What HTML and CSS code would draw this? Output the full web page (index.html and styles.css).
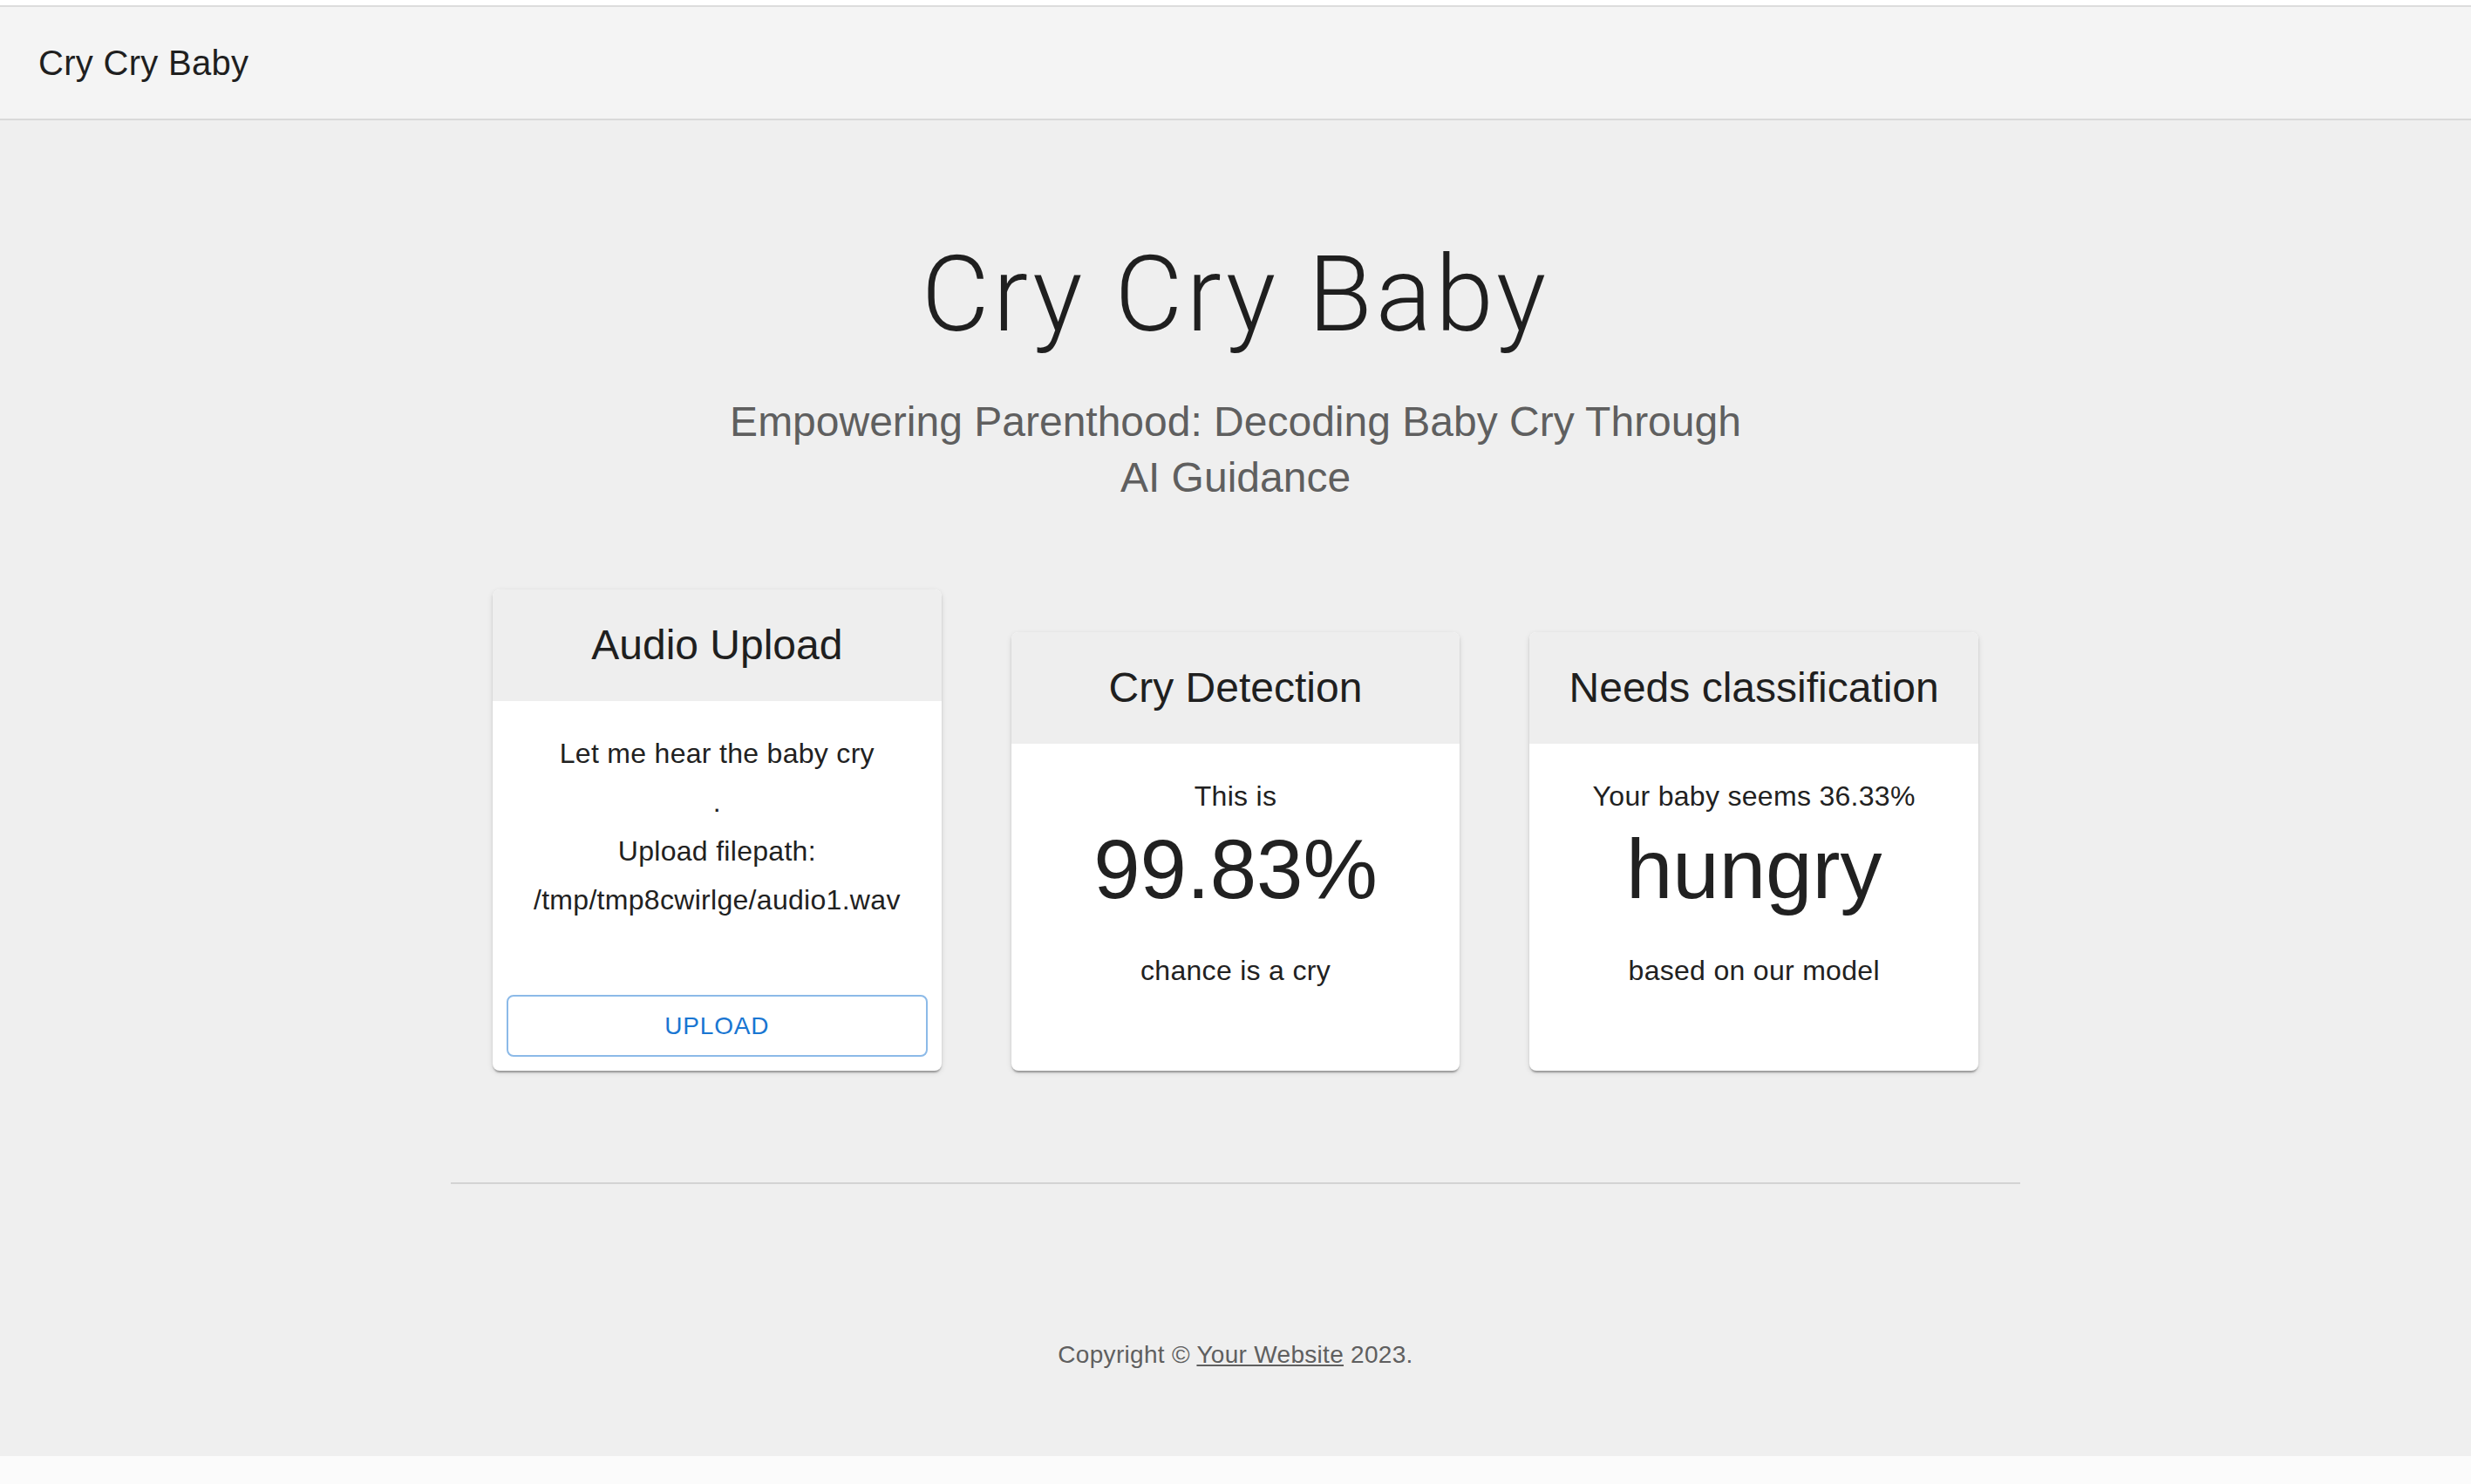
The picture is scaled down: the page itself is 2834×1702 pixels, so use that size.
FILE: index.html
```html
<!DOCTYPE html>
<html lang="en">
<head>
<meta charset="utf-8">
<title>Cry Cry Baby</title>
<link rel="stylesheet" href="styles.css">
</head>
<body>
<div class="page">
  <header class="appbar">
    <div class="toolbar">
      <h6 class="brand">Cry Cry Baby</h6>
    </div>
  </header>

  <main class="hero">
    <h1 class="hero-title">Cry Cry Baby</h1>
    <p class="hero-sub">Empowering Parenthood: Decoding Baby Cry Through AI Guidance</p>
  </main>

  <main class="cards">
    <div class="card-grid">
      <article class="card">
        <div class="card-header"><h2 class="card-title">Audio Upload</h2></div>
        <div class="card-content upload-content">
          <ul class="lines">
            <li>Let me hear the baby cry</li>
            <li>.</li>
            <li>Upload filepath:</li>
            <li>/tmp/tmp8cwirlge/audio1.wav</li>
          </ul>
        </div>
        <div class="card-actions">
          <button class="btn-outlined" type="button">Upload</button>
        </div>
      </article>

      <article class="card">
        <div class="card-header"><h2 class="card-title">Cry Detection</h2></div>
        <div class="card-content result-content">
          <p class="line">This is</p>
          <p class="big">99.83%</p>
          <p class="line">chance is a cry</p>
        </div>
        <div class="card-actions"></div>
      </article>

      <article class="card">
        <div class="card-header"><h2 class="card-title">Needs classification</h2></div>
        <div class="card-content result-content">
          <p class="line">Your baby seems 36.33%</p>
          <p class="big">hungry</p>
          <p class="line">based on our model</p>
        </div>
        <div class="card-actions"></div>
      </article>
    </div>
  </main>

  <footer class="footer">
    <p class="copyright">Copyright © <a class="footer-link" href="#">Your Website</a> 2023.</p>
  </footer>
</div>
</body>
</html>
```

FILE: styles.css
```css
html {
  background: #fbfbfb;
}

body {
  margin: 0;
  padding-top: 6px;
  background: #ffffff;
  font-family: "Liberation Sans", Arial, Helvetica, sans-serif;
  color: #212121;
}

.page {
  background: #efefef;
}

/* App bar */
.appbar {
  background: #f4f4f4;
  border-top: 2px solid #dcdcdc;
  border-bottom: 2px solid #d9d9d9;
}

.toolbar {
  height: 128px;
  display: flex;
  align-items: center;
  padding: 0 44px;
}

.brand {
  margin: 0;
  font-size: 40px;
  line-height: 64px;
  font-weight: 400;
  letter-spacing: 0.3px;
  color: #1f1f1f;
}

/* Hero */
.hero {
  display: block;
  width: 1200px;
  margin: 0 auto;
  padding: 128px 0 96px;
  text-align: center;
}

.hero-title {
  margin: 0 0 42px;
  font-family: Roboto, "Liberation Sans", sans-serif;
  font-weight: 300;
  font-size: 120px;
  line-height: 144px;
  letter-spacing: 4px;
  color: #1f1f1f;
}

.hero-sub {
  margin: 0;
  font-size: 48px;
  line-height: 64px;
  color: #5f5f5f;
}

/* Cards */
.cards {
  display: block;
  width: 1800px;
  margin: 0 auto;
  padding: 0 48px;
  box-sizing: border-box;
}

.card-grid {
  display: grid;
  grid-template-columns: repeat(3, 1fr);
  column-gap: 80px;
  align-items: end;
}

.card {
  display: flex;
  flex-direction: column;
  background: #ffffff;
  border-radius: 8px;
  overflow: hidden;
  box-shadow: 0 4px 2px -2px rgba(0, 0, 0, 0.2), 0 2px 2px 0 rgba(0, 0, 0, 0.14), 0 2px 6px 0 rgba(0, 0, 0, 0.12);
}

.card-header {
  background: #eeeeee;
  padding: 32px;
  text-align: center;
}

.card-title {
  margin: 0;
  font-size: 48px;
  line-height: 64px;
  font-weight: 400;
  color: #1f1f1f;
}

.card-content {
  padding: 32px 32px 32px;
  text-align: center;
}

.upload-content {
  padding-bottom: 65px;
}

.result-content {
  padding-bottom: 55px;
}

.lines {
  list-style: none;
  margin: 0;
  padding: 0;
}

.lines li,
.line {
  margin: 0;
  font-size: 32px;
  line-height: 56px;
  letter-spacing: 0.3px;
  color: #212121;
}

.big {
  margin: 0 0 32px;
  font-size: 96px;
  line-height: 112px;
  font-weight: 400;
  color: #212121;
}

.card-actions {
  padding: 16px;
}

.btn-outlined {
  display: block;
  width: 100%;
  height: 71px;
  margin: 0;
  border: 2px solid #8cbae8;
  border-radius: 8px;
  background: #ffffff;
  color: #1976d2;
  font-family: "Liberation Sans", Arial, sans-serif;
  font-size: 28px;
  letter-spacing: 0.8px;
  text-transform: uppercase;
  cursor: pointer;
}

/* Footer */
.footer {
  width: 1800px;
  margin: 128px auto 0;
  border-top: 2px solid #d3d3d3;
  padding: 176px 48px 96px;
  box-sizing: border-box;
  text-align: center;
}

.copyright {
  margin: 0;
  font-size: 28px;
  line-height: 40px;
  letter-spacing: 0.3px;
  color: #5f5f5f;
}

.footer-link {
  color: inherit;
  text-decoration: underline;
}
```
